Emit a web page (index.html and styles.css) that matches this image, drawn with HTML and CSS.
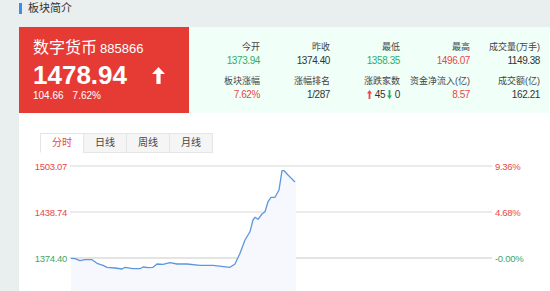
FILE: index.html
```html
<!DOCTYPE html>
<html lang="zh-CN">
<head>
  <meta charset="UTF-8" />
  <title>板块简介</title>
  <link rel="stylesheet" href="styles.css">
</head>
<body>

<div class="header">
  <span class="mark"></span>
  <span class="header-title">板块简介</span>
</div>

<div class="main">
  <div class="summary">
    <div class="quote-card">
      <div class="quote-name">数字货币<span class="quote-code">885866</span></div>
      <div class="quote-price">
        <span>1478.94</span>
        <svg class="quote-arrow" width="13" height="17" viewBox="0 0 13 17">
          <polygon points="6.5,0 13,7 8.6,7 8.6,17 4.4,17 4.4,7 0,7" fill="#fff"/>
        </svg>
      </div>
      <div class="quote-change"><span>104.66</span><span>7.62%</span></div>
    </div>

    <div class="stats">
      <div class="stat"><div class="stat-label">今开</div><div class="stat-value green">1373.94</div></div>
      <div class="stat"><div class="stat-label">昨收</div><div class="stat-value">1374.40</div></div>
      <div class="stat"><div class="stat-label">最低</div><div class="stat-value green">1358.35</div></div>
      <div class="stat"><div class="stat-label">最高</div><div class="stat-value red">1496.07</div></div>
      <div class="stat"><div class="stat-label">成交量(万手)</div><div class="stat-value">1149.38</div></div>

      <div class="stat"><div class="stat-label">板块涨幅</div><div class="stat-value red">7.62%</div></div>
      <div class="stat"><div class="stat-label">涨幅排名</div><div class="stat-value">1/287</div></div>
      <div class="stat">
        <div class="stat-label">涨跌家数</div>
        <div class="stat-value">
          <svg class="mini-arrow" width="5" height="9" viewBox="0 0 5 9"><polygon points="2.5,0 5,3.5 3.4,3.5 3.4,9 1.6,9 1.6,3.5 0,3.5" fill="#e8484b"/></svg>
          45
          <svg class="mini-arrow" width="5" height="9" viewBox="0 0 5 9"><polygon points="2.5,9 5,5.5 3.4,5.5 3.4,0 1.6,0 1.6,5.5 0,5.5" fill="#2fae66"/></svg>
          0
        </div>
      </div>
      <div class="stat"><div class="stat-label">资金净流入(亿)</div><div class="stat-value red">8.57</div></div>
      <div class="stat"><div class="stat-label">成交额(亿)</div><div class="stat-value">162.21</div></div>
    </div>
  </div>

  <div class="chart-panel">
    <div class="tabs">
      <div class="tab active">分时</div>
      <div class="tab">日线</div>
      <div class="tab">周线</div>
      <div class="tab">月线</div>
    </div>

    <svg class="chart" width="531" height="138" viewBox="0 0 531 138">
      <g transform="translate(21,0)">
        <line x1="30" y1="13" x2="452" y2="13" stroke="#e4e4e4" stroke-width="1.5"/>
        <line x1="30" y1="59" x2="452" y2="59" stroke="#e4e4e4" stroke-width="1.5"/>
        <line x1="30" y1="105" x2="452" y2="105" stroke="#e4e4e4" stroke-width="2"/>

        <polygon fill="#f6f8fe" points="31,105.3 35,105.7 40,107.7 45,106.7 52,106.7 57,110.3 63,112.3 67,114.3 75,115 82,116 85,114.3 93,115.7 100,115.7 103,114 108,114.7 113,114.3 117,111 123,111.3 130,109.7 137,111 147,111 160,112.3 173,112.3 190,114.3 195,111 200,100.3 205,87 208,82 210,78.7 213,67 215,64.3 218,66.3 222,61 225,58.7 228,48.7 231,44.3 235,44.3 239,37 242,17.7 244,17.7 248,22 256,29 256,138 31,138"/>
        <polyline fill="none" stroke="#5b97de" stroke-width="1.3" stroke-linejoin="round" points="31,105.3 35,105.7 40,107.7 45,106.7 52,106.7 57,110.3 63,112.3 67,114.3 75,115 82,116 85,114.3 93,115.7 100,115.7 103,114 108,114.7 113,114.3 117,111 123,111.3 130,109.7 137,111 147,111 160,112.3 173,112.3 190,114.3 195,111 200,100.3 205,87 208,82 210,78.7 213,67 215,64.3 218,66.3 222,61 225,58.7 228,48.7 231,44.3 235,44.3 239,37 242,17.7 244,17.7 248,22 255,29"/>

        <text class="axis red-text" x="27" y="16.5" text-anchor="end">1503.07</text>
        <text class="axis red-text" x="27" y="62.5" text-anchor="end">1438.74</text>
        <text class="axis green-text" x="27" y="108.5" text-anchor="end">1374.40</text>

        <text class="axis red-text" x="455" y="16.5">9.36%</text>
        <text class="axis red-text" x="455" y="62.5">4.68%</text>
        <text class="axis green-text" x="455" y="108.5">-0.00%</text>
      </g>
    </svg>
  </div>
</div>

</body>
</html>
```

FILE: styles.css
```css
body {
  margin: 0;
  background: #e9eeee;
  font-family: "Liberation Sans", "Noto Sans CJK SC", sans-serif;
  color: #333;
}

.header {
  display: flex;
  align-items: flex-start;
  height: 25px;
  padding: 2px 0 0 19px;
}

.mark {
  width: 3px;
  height: 11px;
  margin-top: 1px;
  margin-right: 6px;
  background: #3a8ee6;
}

.header-title {
  font-size: 11px;
  line-height: 13px;
}

.main {
  margin-left: 19px;
}

.summary {
  display: flex;
  height: 86px;
}

.quote-card {
  width: 156px;
  padding: 11px 0 0 14px;
  background: #e63b35;
  color: #fff;
}

.quote-name {
  font-size: 16px;
  line-height: 20px;
}

.quote-code {
  font-size: 13px;
  margin-left: 3px;
}

.quote-price {
  display: flex;
  align-items: center;
  margin-top: 3px;
  font-size: 26px;
  font-weight: bold;
  line-height: 26px;
}

.quote-arrow {
  margin-left: 25px;
}

.quote-change {
  display: flex;
  gap: 9px;
  margin-top: 2px;
  font-size: 10px;
  line-height: 12px;
}

.stats {
  flex: 1;
  display: grid;
  grid-template-columns: repeat(5, 70px);
  grid-auto-rows: min-content;
  row-gap: 8px;
  padding: 14px 0 0 1px;
  background: #f0fff8;
}

.stat {
  text-align: right;
}

.stat-label {
  font-size: 9px;
  line-height: 12px;
  color: #444;
}

.stat-value {
  margin-top: 2px;
  font-size: 10px;
  line-height: 12px;
  letter-spacing: -0.4px;
  color: #333;
}

.mini-arrow {
  vertical-align: -1px;
}

.green {
  color: #2fae66;
}

.red {
  color: #e8484b;
}

.chart-panel {
  background: #fff;
  padding-top: 20px;
  height: 158px;
}

.tabs {
  display: flex;
  padding-left: 22px;
}

.tab {
  width: 42px;
  height: 18px;
  margin-left: -1px;
  border: 1px solid #e5e5e5;
  background: #f5f5f5;
  font-size: 10px;
  line-height: 18px;
  text-align: center;
  color: #444;
}

.tab.active {
  background: #fff;
  border-bottom-color: #fff;
  color: #e8454b;
}

.chart {
  display: block;
}

.axis {
  font-family: "Liberation Sans", sans-serif;
  font-size: 9.5px;
  letter-spacing: -0.3px;
}

.red-text {
  fill: #e64a4a;
}

.green-text {
  fill: #3aa86b;
}
```
